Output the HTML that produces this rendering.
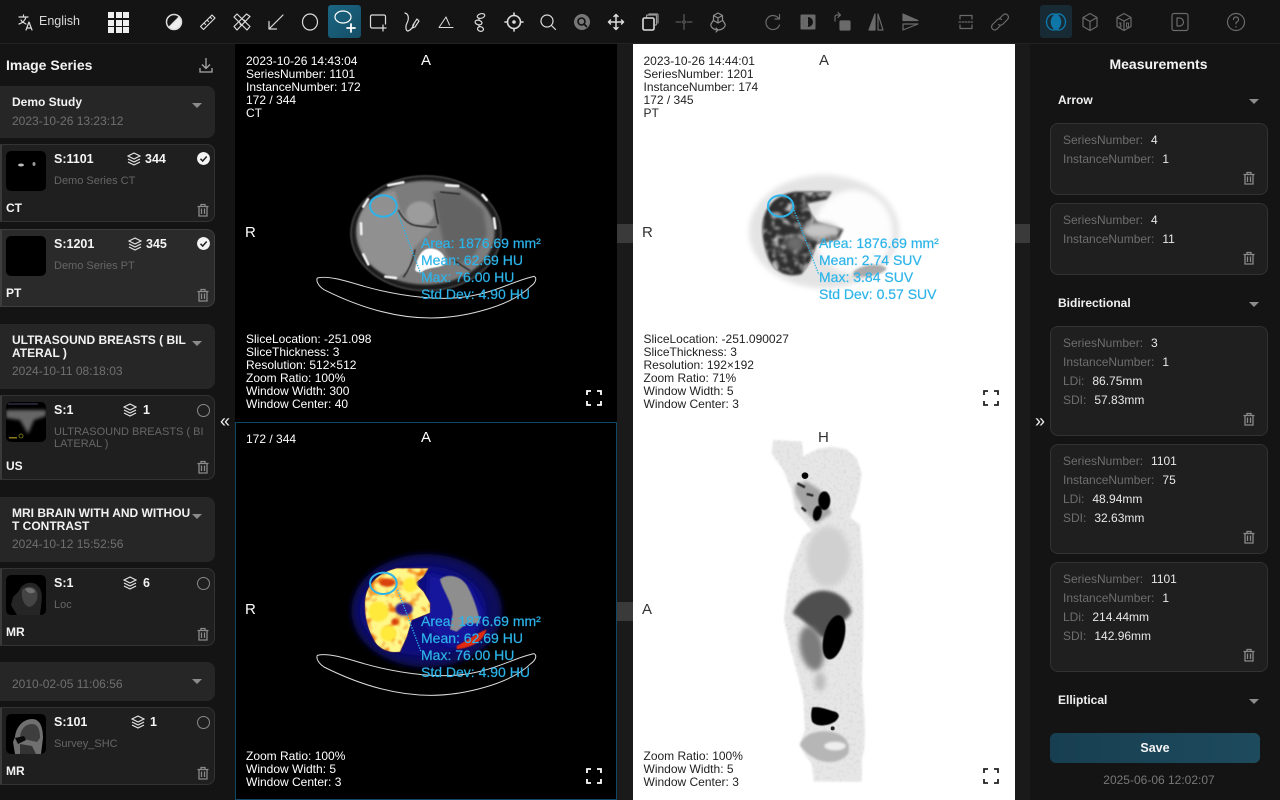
<!DOCTYPE html>
<html><head><meta charset="utf-8"><title>Viewer</title>
<style>
*{box-sizing:border-box}
html,body{margin:0;padding:0;width:1280px;height:800px;overflow:hidden;background:#141414;font-family:"Liberation Sans",sans-serif;color:#fff}
.a{position:absolute}
.ti{position:absolute;top:10px;width:24px;height:24px;fill:none;stroke:#dcdcdc;stroke-width:1.2;stroke-linecap:round;stroke-linejoin:round}
.ti.d{stroke:#6a6a6a}
.vp{position:absolute;width:382px;overflow:hidden}
.t{position:absolute;font-size:12px;line-height:13px;white-space:pre}
.k .t,.k .m{color:#fff}.w .t{color:#222}
.m{position:absolute;font-size:15px;line-height:16px}
.w .m{color:#333}
.ann{position:absolute;left:186px;font-size:14px;line-height:17px;color:#2cb4ea;white-space:pre;-webkit-text-stroke:.2px #2cb4ea}
.gh{position:absolute;left:0;width:215px;background:#262626;border-radius:0 8px 8px 0}
.gh b{position:absolute;left:12px;font-size:12px;line-height:13px;color:#f2f2f2;width:180px;word-break:break-all}
.gh span{position:absolute;left:12px;font-size:12px;line-height:14px;color:#707070}
.tri{position:absolute;width:0;height:0;border-left:5px solid transparent;border-right:5px solid transparent;border-top:5px solid #8c8c8c}
.sc{position:absolute;left:0;width:215px;height:78px;background:#1f1f1f;border:1px solid #333;border-left:2px solid #3a3a3a;border-radius:0 8px 8px 0}
.sc .th{position:absolute;left:4px;top:6px;width:40px;height:40px;background:#000;border-radius:5px;overflow:hidden}
.sc b{position:absolute;font-size:12.5px;line-height:14px;color:#f4f4f4;font-weight:700}
.sc .n{position:absolute;left:52px;top:30px;font-size:11px;line-height:12px;color:#666;width:152px;word-break:break-all}
.sc .mod{left:4px;top:56px;font-size:12px}
.sc .s{left:52px;top:7px}
.lay{position:absolute;width:14px;height:14px;top:7px;fill:none;stroke:#e6e6e6;stroke-width:1.2}
.chk{position:absolute;left:195px;top:7px;width:13px;height:13px;border-radius:50%}
.o{border:1px solid #8a8a8a}
.tr{position:absolute;width:14px;height:14px;fill:none;stroke:#8a8a8a;stroke-width:1.3}
.sc .tr{left:194px;top:58px}
.mc{position:absolute;left:1050px;width:218px;background:#1f1f1f;border:1px solid #323232;border-radius:8px}
.mc .tr{left:191px}
.mc div{position:absolute;left:12px;font-size:12px;line-height:14px;color:#6e6e6e;white-space:pre}
.mc div i{font-style:normal;color:#e8e8e8;margin-left:8px}
.h3{position:absolute;left:1058px;font-size:12px;font-weight:700;color:#f0f0f0;line-height:14px}
</style></head><body>
<svg width="0" height="0" style="position:absolute"><defs>
<symbol id="trash" viewBox="0 0 14 14"><path d="M1.5 3.5h11M5 3V1.5h4V3M3 3.5V13h8V3.5M5.5 5.5V11M8.5 5.5V11"/></symbol>
<symbol id="layers" viewBox="0 0 14 14"><path d="M7 1l6 3-6 3-6-3zM1 7l6 3 6-3M1 10l6 3 6-3"/></symbol>
<filter id="b1" x="-20%" y="-20%" width="140%" height="140%"><feGaussianBlur stdDeviation="1.5"/></filter>
<filter id="b2" x="-20%" y="-20%" width="140%" height="140%"><feGaussianBlur stdDeviation="3"/></filter>
<filter id="b25" x="-20%" y="-20%" width="140%" height="140%"><feGaussianBlur stdDeviation="5"/></filter>
<filter id="b3" x="-30%" y="-30%" width="160%" height="160%"><feGaussianBlur stdDeviation="8"/></filter>
<filter id="mot" x="0" y="0" width="100%" height="100%"><feTurbulence type="fractalNoise" baseFrequency=".035" numOctaves="2" seed="3"/><feColorMatrix values="0 0 0 0 1  0 0 0 0 .93  0 0 0 0 .25  4 0 0 0 -1.1"/><feGaussianBlur stdDeviation="2"/><feComposite in2="SourceGraphic" operator="in"/></filter>
<filter id="motw" x="0" y="0" width="100%" height="100%"><feTurbulence type="fractalNoise" baseFrequency=".045" numOctaves="2" seed="8"/><feColorMatrix values="0 0 0 0 .55  0 0 0 0 .55  0 0 0 0 .55  3 0 0 0 -1.4"/><feGaussianBlur stdDeviation="3"/><feComposite in2="SourceGraphic" operator="in"/></filter>
<filter id="mots" x="0" y="0" width="100%" height="100%"><feTurbulence type="fractalNoise" baseFrequency=".1" numOctaves="2" seed="5"/><feColorMatrix values="0 0 0 0 .6  0 0 0 0 .6  0 0 0 0 .6  3 0 0 0 -1.5"/><feGaussianBlur stdDeviation="1"/><feComposite in2="SourceGraphic" operator="in"/></filter>
</defs></svg>

<!-- Toolbar -->
<div class="a" style="left:0;top:0;width:1280px;height:44px;background:#141414;border-bottom:1px solid #222"></div>
<svg class="ti" style="left:16px;width:20px;height:20px;top:13px;stroke:#ddd" viewBox="0 0 20 20"><path d="M3 4h9M7.500 2v2M10 4c-1 4-4 6-7 7M5 7c1 2 3 3 5 4M10 17l3-8 3 8M11 15h4"/></svg>
<div class="a" style="left:39px;top:14px;font-size:12.500px;line-height:15px;color:#d8d8d8">English</div>
<div class="a" style="left:108px;top:12px;width:21px;height:21px;background:
linear-gradient(#eee,#eee) 0 0/6px 6px no-repeat,linear-gradient(#eee,#eee) 7.500px 0/6px 6px no-repeat,linear-gradient(#eee,#eee) 15px 0/6px 6px no-repeat,
linear-gradient(#eee,#eee) 0 7.500px/6px 6px no-repeat,linear-gradient(#eee,#eee) 7.500px 7.500px/6px 6px no-repeat,linear-gradient(#eee,#eee) 15px 7.500px/6px 6px no-repeat,
linear-gradient(#eee,#eee) 0 15px/6px 6px no-repeat,linear-gradient(#eee,#eee) 7.500px 15px/6px 6px no-repeat,linear-gradient(#eee,#eee) 15px 15px/6px 6px no-repeat"></div>
<svg class="ti" style="left:162px" viewBox="0 0 24 24"><circle cx="12" cy="12" r="7.500" stroke-width="1.500"/><path d="M17.300 6.700A7.500 7.500 0 0 1 6.700 17.300z" fill="#eee"/></svg>
<svg class="ti" style="left:196px" viewBox="0 0 24 24"><path d="M4.500 16.500L16 5l3 3L7.500 19.500zM8 13l1.500 1.500M11 10l1.500 1.500M14 7l1.500 1.500"/></svg>
<svg class="ti" style="left:230px" viewBox="0 0 24 24"><path d="M4 16.500L16.500 4 20 6.500 7 20z"/><path d="M7 4L20 16.500 17 20 4 7z"/><path d="M10 14l1.500 1.500M14 10l1.500 1.500"/></svg>
<svg class="ti" style="left:264px" viewBox="0 0 24 24"><path d="M19 5L5 19M5 11.500V19h7.500"/></svg>
<svg class="ti" style="left:298px" viewBox="0 0 24 24"><ellipse cx="12" cy="12" rx="7.500" ry="8"/></svg>
<div class="a" style="left:328px;top:5px;width:33px;height:33px;background:linear-gradient(135deg,#1b6683,#154e66);border-radius:3px"></div>
<svg class="ti" style="left:333px;top:9px;stroke:#fff" viewBox="0 0 24 24"><ellipse cx="10" cy="8" rx="8" ry="6"/><path d="M18 15v8M14 19h8" stroke-width="1.800"/></svg>
<svg class="ti" style="left:366px" viewBox="0 0 24 24"><path d="M14 18H6a1.500 1.500 0 0 1-1.500-1.500v-10A1.500 1.500 0 0 1 6 5h12a1.500 1.500 0 0 1 1.500 1.500V14M17 15v6M14 18h6"/></svg>
<svg class="ti" style="left:399px" viewBox="0 0 24 24"><path d="M6 3c4 1 4 6 2 10s-1 8 1 8c3-1 5-4 6-7M14 15l4-6 2 2-4 6-2.500 1z"/></svg>
<svg class="ti" style="left:434px;stroke-width:1" viewBox="0 0 24 24"><path d="M12 7L5 17.500h14M12 7l3.500 8"/></svg>
<svg class="ti" style="left:468px" viewBox="0 0 24 24"><ellipse cx="13" cy="6" rx="3.800" ry="2.300" transform="rotate(-15 13 6)"/><ellipse cx="10.500" cy="12.500" rx="3.500" ry="2.300" transform="rotate(15 10.500 12.500)"/><ellipse cx="12.500" cy="19" rx="3" ry="2.300" transform="rotate(15 12.500 19)"/><path d="M11 8v2M11 15v2"/></svg>
<svg class="ti" style="left:502px;stroke-width:1.600" viewBox="0 0 24 24"><circle cx="12" cy="12" r="6.500"/><circle cx="12" cy="12" r="1" fill="#e2e2e2"/><path d="M12 3v2.500M12 18.500V21M3 12h2.500M18.500 12H21"/></svg>
<svg class="ti" style="left:536px" viewBox="0 0 24 24"><circle cx="11" cy="11" r="6"/><path d="M15.500 15.500L19.500 19.500"/></svg>
<svg class="ti" style="left:570px;stroke:#111" viewBox="0 0 24 24"><circle cx="12" cy="12" r="8" fill="#777" stroke="none"/><circle cx="11.500" cy="11.500" r="3.500" stroke="#111" stroke-width="1.600"/><path d="M14 14l2.500 2.500" stroke-width="1.600"/></svg>
<svg class="ti" style="left:604px" viewBox="0 0 24 24"><path d="M12 4.500v15M4.500 12h15M10 6.500l2-2 2 2M10 17.500l2 2 2-2M6.500 10l-2 2 2 2M17.500 10l2 2-2 2" stroke-width="1.500"/></svg>
<svg class="ti" style="left:638px" viewBox="0 0 24 24"><path d="M8.500 7.500V6a1 1 0 0 1 1-1h8a1 1 0 0 1 1 1v8a1 1 0 0 1-1 1M11 5V4h8a1 1 0 0 1 1 1v8" stroke="#999"/><rect x="5" y="8" width="11" height="12" rx="1.500" stroke-width="1.600"/></svg>
<svg class="ti d" style="left:672px;stroke-width:1" viewBox="0 0 24 24"><circle cx="12" cy="12" r="1.300"/><path d="M12 4.500v5M12 14.500v5M4 12h5M15 12h5"/></svg>
<svg class="ti" style="left:706px;stroke:#8e8e8e" viewBox="0 0 24 24"><path d="M12 3l4.500 2.500v5L12 13l-4.500-2.500v-5zM7.500 5.500L12 8l4.500-2.500M12 8v5M7.500 10L5 14c-1 3 3 6 7 6s8-3 7-6l-2.500-4M10 22l2-2-2-2"/></svg>
<svg class="ti d" style="left:761px" viewBox="0 0 24 24"><path d="M18 9A7 7 0 1 0 18.500 15M18.500 4.500V9H14"/></svg>
<svg class="ti d" style="left:796px" viewBox="0 0 24 24"><rect x="4.500" y="4.500" width="15" height="15" rx="1" fill="#6a6a6a" stroke="none"/><circle cx="12" cy="12" r="5" fill="#141414" stroke="none"/><path d="M12 7a5 5 0 0 0 0 10z" fill="#6a6a6a" stroke="none"/></svg>
<svg class="ti d" style="left:830px" viewBox="0 0 24 24"><rect x="10" y="11" width="10" height="9" rx="1" fill="#6a6a6a"/><path d="M5 11V7a2 2 0 0 1 2-2h3M8 2.500L10.500 5 8 7.500"/></svg>
<svg class="ti d" style="left:864px" viewBox="0 0 24 24"><path d="M11 4v16H5z" fill="#6a6a6a"/><path d="M14 4v16h5z"/></svg>
<svg class="ti d" style="left:898px" viewBox="0 0 24 24"><path d="M5 4l15 6.500H5z" fill="#6a6a6a"/><path d="M5 14h15L5 20z"/></svg>
<svg class="ti d" style="left:954px" viewBox="0 0 24 24"><path d="M6 9V5.500h12V9M6 15v3.500h12V15"/><path d="M5 12h14" stroke-dasharray="1.500 1.500"/></svg>
<svg class="ti d" style="left:988px" viewBox="0 0 24 24"><path d="M11 9l4-4c2-1.500 3.500-1 4.500 0s1.500 2.500 0 4.500l-5 5c-2 1-3 1-4 0M13 15l-4 4c-2 1.500-3.500 1-4.500 0s-1.500-2.500 0-4.500l5-5c2-1 3-1 4 0"/></svg>
<div class="a" style="left:1040px;top:5px;width:32px;height:33px;background:#182a33;border-radius:3px"></div>
<svg class="ti" style="left:1044px;stroke:#0f76a8;stroke-width:1.400" viewBox="0 0 24 24"><ellipse cx="9.500" cy="12" rx="7" ry="8"/><ellipse cx="14.500" cy="12" rx="7" ry="8"/><path d="M12 4.500a7 8 0 0 1 0 15a7 8 0 0 1 0-15z" fill="#0f76a8"/></svg>
<svg class="ti d" style="left:1078px" viewBox="0 0 24 24"><path d="M12 3.500l7 4v9l-7 4-7-4v-9zM5 7.500L12 11.500l7-4M12 11.500V20.500"/></svg>
<svg class="ti d" style="left:1112px" viewBox="0 0 24 24"><path d="M12 3.500l7 4v9l-7 4-7-4v-9zM5 7.500L12 11l7-3.500M12 11v9.500"/><path d="M7 13h2l-1 2h1v2H7M14.500 13v4h2v-4z" stroke-width="1"/></svg>
<svg class="ti d" style="left:1168px" viewBox="0 0 24 24"><rect x="4" y="3.500" width="16" height="17" rx="2"/><path d="M9 8v8h2.500a4 4 0 0 0 0-8z"/></svg>
<svg class="ti d" style="left:1224px" viewBox="0 0 24 24"><circle cx="12" cy="12" r="8.500"/><path d="M9.500 9.500a2.500 2.500 0 1 1 3.500 2.300c-.7.400-1 1-1 2M12 16.500v.5"/></svg>

<!-- Left panel -->
<div class="a" style="left:6px;top:57px;font-size:14px;line-height:17px;font-weight:700;color:#f2f2f2">Image Series</div>
<svg class="a" style="left:198px;top:56px;fill:none;stroke:#a8a8a8;stroke-width:1.300" width="16" height="18" viewBox="0 0 16 18"><path d="M8 2v10M4 8.500L8 12.500l4-4M2 12v4h12v-4"/></svg>

<div class="gh" style="top:86px;height:52px"><b style="top:10px">Demo Study</b><span style="top:28px">2023-10-26 13:23:12</span></div>
<div class="tri" style="left:192px;top:103px"></div>

<div class="sc" style="top:144px"><div class="th"><svg width="40" height="40"><ellipse cx="15" cy="14" rx="3" ry="1.500" fill="#bbb"/><ellipse cx="28" cy="13" rx="1.500" ry="2" fill="#999"/></svg></div>
<b class="s">S:1101</b><svg class="lay" style="left:125px"><use href="#layers"/></svg><b style="left:143px;top:7px">344</b>
<svg class="chk" viewBox="0 0 13 13"><circle cx="6.500" cy="6.500" r="6.500" fill="#f4f4f4"/><path d="M3.500 6.800l2.200 2.200 4-4.500" fill="none" stroke="#222" stroke-width="1.500"/></svg>
<div class="n">Demo Series CT</div><b class="mod">CT</b><svg class="tr"><use href="#trash"/></svg></div>

<div class="sc" style="top:229px;background:#2a2a2a;border-color:#3e3e3e"><div class="th"></div>
<b class="s">S:1201</b><svg class="lay" style="left:126px"><use href="#layers"/></svg><b style="left:144px;top:7px">345</b>
<svg class="chk" viewBox="0 0 13 13"><circle cx="6.500" cy="6.500" r="6.500" fill="#f4f4f4"/><path d="M3.500 6.800l2.200 2.200 4-4.500" fill="none" stroke="#222" stroke-width="1.500"/></svg>
<div class="n">Demo Series PT</div><b class="mod">PT</b><svg class="tr"><use href="#trash"/></svg></div>

<div class="gh" style="top:324px;height:65px"><b style="top:10px">ULTRASOUND BREASTS ( BILATERAL )</b><span style="top:40px">2024-10-11 08:18:03</span></div>
<div class="tri" style="left:192px;top:341px"></div>

<div class="sc" style="top:395px;height:85px"><div class="th"><svg width="40" height="40"><path d="M0 8h40v6l-12 4-6 14-8-14-14-2z" fill="#666" filter="url(#b1)"/><path d="M2 2h30" stroke="#446" stroke-width="1"/><rect x="3" y="35" width="8" height="1.500" fill="#8a7a18"/><circle cx="15" cy="34" r="2" fill="none" stroke="#6a6a18"/></svg></div>
<b class="s">S:1</b><svg class="lay" style="left:121px"><use href="#layers"/></svg><b style="left:141px;top:7px">1</b>
<div class="chk o" style="top:8px"></div>
<div class="n">ULTRASOUND BREASTS ( BILATERAL )</div><b class="mod" style="top:63px">US</b><svg class="tr" style="top:64px"><use href="#trash"/></svg></div>

<div class="a" style="left:220px;top:412px;font-size:18px;line-height:18px;color:#eee">«</div>

<div class="gh" style="top:497px;height:65px"><b style="top:10px">MRI BRAIN WITH AND WITHOUT CONTRAST</b><span style="top:40px">2024-10-12 15:52:56</span></div>
<div class="tri" style="left:192px;top:514px"></div>

<div class="sc" style="top:568px"><div class="th"><svg width="40" height="40" viewBox="0 0 40 40"><path d="M11 40L5 30l2-8 6-6C16 7 28 5 33 12c5 7 2 18 1 28z" fill="#252525"/><path d="M16 15c5-5 13-4 15 2 2 7-2 14-8 15-4-1-8-7-7-17z" fill="#444"/><path d="M19 14c4-2 9-1 10 3-3 2-7 2-10-3z" fill="#707070"/></svg></div>
<b class="s">S:1</b><svg class="lay" style="left:121px"><use href="#layers"/></svg><b style="left:141px;top:7px">6</b>
<div class="chk o" style="top:8px"></div>
<div class="n">Loc</div><b class="mod">MR</b><svg class="tr"><use href="#trash"/></svg></div>

<div class="gh" style="top:662px;height:39px"><span style="top:15px">2010-02-05 11:06:56</span></div>
<div class="tri" style="left:192px;top:679px"></div>

<div class="sc" style="top:707px"><div class="th"><svg width="40" height="40" viewBox="0 0 40 40"><path d="M9 40L7 28l2-5C10 12 18 5 26 5s11 8 11 19l-2 16z" fill="#707070"/><path d="M14 24c0-9 6-14 12-14s8 6 8 14l-3 4-9-2z" fill="#3e3e3e"/><path d="M9 24l9-2 2 4-8 4z" fill="#0a0a0a"/><path d="M14 30l12 2 4 8H14z" fill="#333"/></svg></div>
<b class="s">S:101</b><svg class="lay" style="left:129px"><use href="#layers"/></svg><b style="left:148px;top:7px">1</b>
<div class="chk o" style="top:8px"></div>
<div class="n">Survey_SHC</div><b class="mod">MR</b><svg class="tr"><use href="#trash"/></svg></div>

<!-- Center -->
<div class="a" style="left:235px;top:44px;width:795px;height:756px;background:#1a1a1a"></div>
<div class="a" style="left:617px;top:224px;width:16px;height:19px;background:#3a3a3a"></div>
<div class="a" style="left:617px;top:602px;width:16px;height:19px;background:#3a3a3a"></div>
<div class="a" style="left:1015px;top:224px;width:15px;height:19px;background:#3a3a3a"></div>

<!-- VP1 CT -->
<div class="vp k" style="left:235px;top:44px;height:378px;background:#000">
<div class="t" style="left:11px;top:11px">2023-10-26 14:43:04
SeriesNumber: 1101
InstanceNumber: 172
172 / 344
CT</div>
<div class="m" style="left:186px;top:9px">A</div><div class="m" style="left:10px;top:181px">R</div>
<div class="t" style="left:11px;top:289px">SliceLocation: -251.098
SliceThickness: 3
Resolution: 512×512
Zoom Ratio: 100%
Window Width: 300
Window Center: 40</div>
<svg class="a" style="left:65px;top:116px" width="260" height="170" viewBox="0 0 780 510">
<ellipse cx="378" cy="220" rx="228" ry="175" fill="#3a3a3a" filter="url(#b1)"/>
<ellipse cx="378" cy="220" rx="222" ry="169" fill="#1e1e1e" filter="url(#b1)"/>
<ellipse cx="376" cy="218" rx="208" ry="156" fill="#7c7c7c" filter="url(#b2)"/>
<polygon points="400,95 480,95 550,150 560,225 515,295 470,315 440,285 420,200" fill="#646464" filter="url(#b25)"/>
<path d="M172 205C175 150 210 105 285 92L300 150L340 195L400 205L345 260L330 330L290 352C240 345 172 300 172 205Z" fill="#909090" filter="url(#b2)"/>
<ellipse cx="360" cy="160" rx="42" ry="36" fill="#9c9c9c" filter="url(#b2)"/>
<path d="M295 150C310 180 330 195 350 197S400 205 410 200M402 118C408 150 410 175 415 192M310 352C330 325 340 300 345 268M420 96L480 102M460 300L510 332" stroke="#222" stroke-width="4" fill="none" filter="url(#b1)"/>
<path d="M345 330C350 300 360 270 385 266C415 262 440 285 436 312C420 325 385 320 365 336C355 338 348 335 345 330Z" fill="#fff" filter="url(#b1)"/>
<g stroke="#efefef" stroke-width="8" fill="none" stroke-linecap="round" filter="url(#b1)"><path d="M265 76L310 67M204 118L190 140M183 190L184 222M190 283L205 313M256 350L288 354M438 76L475 78M548 105L560 120M582 175L586 205"/></g>
<path d="M52 354C85 346 135 362 192 379C292 407 432 429 532 404C602 389 652 359 702 349C712 354 707 369 692 379C632 439 492 474 392 474C272 474 162 434 72 389C57 379 47 364 52 354Z" fill="none" stroke="#ddd" stroke-width="3"/>
<ellipse cx="250" cy="138" rx="40" ry="32" fill="none" stroke="#2cb4ea" stroke-width="6"/>
<path d="M293 158L363 343" stroke="#2cb4ea" stroke-width="4" stroke-dasharray="4 4"/></svg>
<div class="ann" style="top:191px">Area: 1876.69 mm²
Mean: 62.69 HU
Max: 76.00 HU
Std Dev: 4.90 HU</div>
<svg class="a" style="left:351px;top:346px;fill:none;stroke:#fff;stroke-width:1.800" width="16" height="16"><path d="M1 5V1h4M11 1h4v4M15 11v4h-4M5 15H1v-4"/></svg>
</div>

<!-- VP2 PT -->
<div class="vp w" style="left:633px;top:44px;height:378px;background:#fff">
<div class="t" style="left:10.500px;top:11px">2023-10-26 14:44:01
SeriesNumber: 1201
InstanceNumber: 174
172 / 345
PT</div>
<div class="m" style="left:186px;top:9px">A</div><div class="m" style="left:9px;top:181px">R</div>
<div class="t" style="left:10.500px;top:289px">SliceLocation: -251.090027
SliceThickness: 3
Resolution: 192×192
Zoom Ratio: 71%
Window Width: 5
Window Center: 3</div>
<svg class="a" style="left:87px;top:116px" width="240" height="160" viewBox="0 0 720 480">
<ellipse cx="312" cy="215" rx="225" ry="170" fill="#e4e4e4" filter="url(#b3)"/>
<ellipse cx="400" cy="215" rx="118" ry="125" fill="#fdfdfd" filter="url(#b3)"/>
<path d="M128 190C135 140 165 105 225 95L335 95L320 118L262 130C270 160 285 185 300 188L370 208L355 238L290 252L270 305L245 342C210 352 175 345 150 305C135 275 125 230 128 190Z" fill="#2e2e2e" filter="url(#b2)"/>
<path d="M128 190C135 140 165 105 225 95L335 95L320 118L262 130C270 160 285 185 300 188L370 208L355 238L290 252L270 305L245 342C210 352 175 345 150 305C135 275 125 230 128 190Z" fill="#fff" filter="url(#motw)"/>
<ellipse cx="300" cy="212" rx="55" ry="26" fill="#c4c4c4" filter="url(#b3)"/>
<ellipse cx="225" cy="250" rx="28" ry="24" fill="#6c6c6c" filter="url(#b3)"/>
<path d="M400 335C430 310 480 310 500 325C490 345 440 352 400 350Z" fill="#aaa" filter="url(#b2)"/>
<ellipse cx="182" cy="138" rx="38" ry="32" fill="none" stroke="#2cb4ea" stroke-width="6"/>
<path d="M222 150L297 345" stroke="#2cb4ea" stroke-width="4" stroke-dasharray="4 4"/></svg>
<div class="ann" style="top:191px">Area: 1876.69 mm²
Mean: 2.74 SUV
Max: 3.84 SUV
Std Dev: 0.57 SUV</div>
<svg class="a" style="left:350px;top:346px;fill:none;stroke:#222;stroke-width:1.800" width="16" height="16"><path d="M1 5V1h4M11 1h4v4M15 11v4h-4M5 15H1v-4"/></svg>
</div>

<!-- VP3 fusion -->
<div class="vp k" style="left:235px;top:422px;height:378px;background:#000;border:1px solid #0e4a66">
<div class="t" style="left:10px;top:10px">172 / 344</div>
<div class="m" style="left:185px;top:7px">A</div><div class="m" style="left:9px;top:179px">R</div>
<div class="t" style="left:10px;top:327px">Zoom Ratio: 100%
Window Width: 5
Window Center: 3</div>
<svg class="a" style="left:64px;top:117px" width="260" height="170" viewBox="0 0 780 510">
<ellipse cx="380" cy="212" rx="226" ry="170" fill="#0a0a5c" filter="url(#b3)"/>
<ellipse cx="370" cy="212" rx="190" ry="135" fill="#0c0c80" filter="url(#b3)"/>
<polygon points="385,100 510,140 550,220 520,300 450,320 380,260" fill="#12129c" filter="url(#b3)"/>
<path d="M195 195C195 150 215 105 290 85L385 85L370 110L345 130L370 155L390 190L390 218L335 240L320 290L300 335C270 340 240 328 225 305C205 270 195 235 195 195Z" fill="#f07a08" filter="url(#b1)"/>
<path d="M195 195C195 150 215 105 290 85L385 85L370 110L345 130L370 155L390 190L390 218L335 240L320 290L300 335C270 340 240 328 225 305C205 270 195 235 195 195Z" fill="#fff" filter="url(#mot)"/>
<g fill="#ffe93a" filter="url(#b2)"><circle cx="235" cy="215" r="30"/><circle cx="265" cy="280" r="24"/><circle cx="330" cy="135" r="22"/></g>
<g fill="#d8400a" filter="url(#b2)"><ellipse cx="262" cy="128" rx="24" ry="12"/><circle cx="285" cy="245" r="10"/></g>
<ellipse cx="312" cy="207" rx="26" ry="20" fill="#2d1a90" filter="url(#b2)"/>
<path d="M420 118C440 100 480 105 500 135C515 160 535 210 540 250L500 250L470 275L450 268L458 220C455 185 425 145 420 118Z" fill="#8e8e8e" filter="url(#b1)"/>
<path d="M470 318C495 305 530 280 560 268C550 298 530 320 470 328Z" fill="#e22a10" filter="url(#b1)"/>
<path d="M52 346C85 338 135 354 192 371C292 399 432 421 532 396C602 381 652 351 702 341C712 346 707 361 692 371C632 431 492 466 392 466C272 466 162 426 72 381C57 371 47 356 52 346Z" fill="none" stroke="#ddd" stroke-width="3"/>
<ellipse cx="250" cy="130" rx="40" ry="32" fill="none" stroke="#2cb4ea" stroke-width="6"/>
<path d="M293 150L363 335" stroke="#2cb4ea" stroke-width="4" stroke-dasharray="4 4"/></svg>
<div class="ann" style="left:185px;top:190px">Area: 1876.69 mm²
Mean: 62.69 HU
Max: 76.00 HU
Std Dev: 4.90 HU</div>
<svg class="a" style="left:350px;top:345px;fill:none;stroke:#fff;stroke-width:1.800" width="16" height="16"><path d="M1 5V1h4M11 1h4v4M15 11v4h-4M5 15H1v-4"/></svg>
</div>

<!-- VP4 MIP -->
<div class="vp w" style="left:633px;top:422px;height:378px;background:#fff">
<div class="m" style="left:185px;top:8px">H</div><div class="m" style="left:9px;top:180px">A</div>
<div class="t" style="left:10.500px;top:328px">Zoom Ratio: 100%
Window Width: 5
Window Center: 3</div>
<svg class="a" style="left:107px;top:8px" width="150" height="360" viewBox="0 0 450 1080">
<polygon points="100,30 185,35 190,80 230,58 270,50 320,58 350,85 365,130 358,180 345,225 330,262 360,285 368,400 370,560 368,650 365,750 372,850 375,900 372,960 365,990 365,1055 222,1055 215,1000 195,975 180,945 195,900 190,800 172,730 150,650 132,570 140,490 150,430 170,370 190,320 215,300 165,240 155,180 130,120 95,70" fill="#e6e6e6" filter="url(#b2)"/>
<polygon points="100,30 185,35 190,80 230,58 270,50 320,58 350,85 365,130 358,180 345,225 330,262 360,285 368,400 370,560 368,650 365,750 372,850 375,900 372,960 365,990 365,1055 222,1055 215,1000 195,975 180,945 195,900 190,800 172,730 150,650 132,570 140,490 150,430 170,370 190,320 215,300 165,240 155,180 130,120 95,70" fill="#fff" filter="url(#mots)" opacity=".4"/>
<ellipse cx="265" cy="380" rx="65" ry="90" fill="#d0d0d0" filter="url(#b3)"/>
<path d="M158 550C175 510 210 482 250 482C295 484 325 510 335 545C325 570 295 580 280 590L250 625C225 610 195 570 158 550Z" fill="#505050" filter="url(#b25)"/>
<ellipse cx="215" cy="655" rx="35" ry="68" fill="#7c7c7c" transform="rotate(-12 215 655)" filter="url(#b3)"/>
<ellipse cx="240" cy="755" rx="16" ry="28" fill="#bbb" filter="url(#b3)"/>
<ellipse cx="282" cy="622" rx="31" ry="68" fill="#040404" transform="rotate(14 282 622)" filter="url(#b1)"/>
<path d="M217 832C240 828 265 840 285 845C300 852 300 862 285 875C260 890 230 890 217 876C212 862 213 845 217 832Z" fill="#040404" filter="url(#b1)"/>
<circle cx="278" cy="895" r="6" fill="#222"/>
<path d="M180 945C190 910 240 895 290 910C320 920 332 945 325 970C305 998 260 1004 225 985C205 975 190 960 180 945Z" fill="#b6b6b6" filter="url(#b2)"/>
<ellipse cx="285" cy="948" rx="32" ry="13" fill="#eee" filter="url(#b2)"/>
<circle cx="195" cy="137" r="10" fill="#080808"/>
<polygon points="165,165 200,155 240,180 275,250 230,280 200,250 165,190" fill="#a4a4a4" filter="url(#b25)"/>
<ellipse cx="253" cy="212" rx="18" ry="28" fill="#060606" filter="url(#b1)"/>
<ellipse cx="232" cy="250" rx="13" ry="23" fill="#060606" transform="rotate(12 232 250)" filter="url(#b1)"/>
<path d="M172 160L195 172M200 192L220 197M185 232L198 244" stroke="#222" stroke-width="7" fill="none" filter="url(#b1)"/>
</svg>
<svg class="a" style="left:350px;top:346px;fill:none;stroke:#222;stroke-width:1.800" width="16" height="16"><path d="M1 5V1h4M11 1h4v4M15 11v4h-4M5 15H1v-4"/></svg>
</div>

<!-- Right panel -->
<div class="a" style="left:1030px;top:44px;width:250px;height:756px;background:#141414"></div>
<div class="a" style="left:1035px;top:412px;font-size:18px;line-height:18px;color:#eee">»</div>
<div class="a" style="left:1030px;top:56px;width:257px;text-align:center;font-size:14px;line-height:17px;font-weight:700;color:#f4f4f4">Measurements</div>
<div class="h3" style="top:93px">Arrow</div><div class="tri" style="left:1249px;top:99px"></div>
<div class="mc" style="top:123px;height:72px"><div style="top:9px">SeriesNumber:<i>4</i></div><div style="top:28px">InstanceNumber:<i>1</i></div><svg class="tr" style="top:47px"><use href="#trash"/></svg></div>
<div class="mc" style="top:203px;height:72px"><div style="top:9px">SeriesNumber:<i>4</i></div><div style="top:28px">InstanceNumber:<i>11</i></div><svg class="tr" style="top:47px"><use href="#trash"/></svg></div>
<div class="h3" style="top:296px">Bidirectional</div><div class="tri" style="left:1249px;top:302px"></div>
<div class="mc" style="top:326px;height:110px"><div style="top:9px">SeriesNumber:<i>3</i></div><div style="top:28px">InstanceNumber:<i>1</i></div><div style="top:47px">LDi:<i>86.75mm</i></div><div style="top:66px">SDI:<i>57.83mm</i></div><svg class="tr" style="top:85px"><use href="#trash"/></svg></div>
<div class="mc" style="top:444px;height:110px"><div style="top:9px">SeriesNumber:<i>1101</i></div><div style="top:28px">InstanceNumber:<i>75</i></div><div style="top:47px">LDi:<i>48.94mm</i></div><div style="top:66px">SDI:<i>32.63mm</i></div><svg class="tr" style="top:85px"><use href="#trash"/></svg></div>
<div class="mc" style="top:562px;height:110px"><div style="top:9px">SeriesNumber:<i>1101</i></div><div style="top:28px">InstanceNumber:<i>1</i></div><div style="top:47px">LDi:<i>214.44mm</i></div><div style="top:66px">SDI:<i>142.96mm</i></div><svg class="tr" style="top:85px"><use href="#trash"/></svg></div>
<div class="h3" style="top:693px">Elliptical</div><div class="tri" style="left:1249px;top:699px"></div>
<div class="a" style="left:1050px;top:733px;width:210px;height:30px;border-radius:6px;background:linear-gradient(90deg,#173f51,#1e4a5e);text-align:center;font-size:12.500px;line-height:30px;font-weight:700;color:#f4f4f4">Save</div>
<div class="a" style="left:1054px;top:773px;width:210px;text-align:center;font-size:12px;line-height:15px;color:#777">2025-06-06 12:02:07</div>
</body></html>
